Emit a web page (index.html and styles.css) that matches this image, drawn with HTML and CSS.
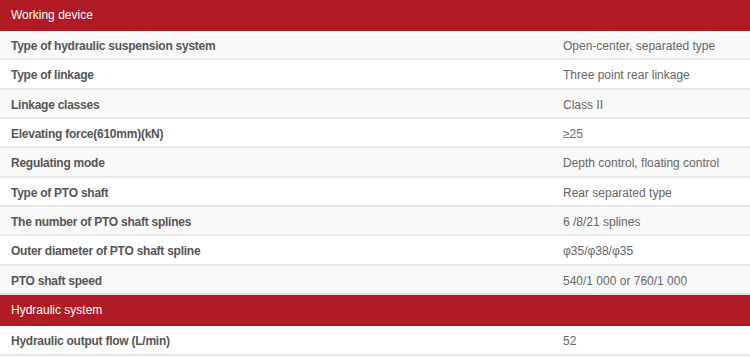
FILE: index.html
```html
<!DOCTYPE html>
<html>
<head>
<meta charset="utf-8">
<link rel="stylesheet" href="styles.css">
</head>
<body>
<div class="spec">
  <div class="group">Working device</div>
  <div class="row odd"><div class="label">Type of hydraulic suspension system</div><div class="value">Open-center, separated type</div></div>
  <div class="row"><div class="label">Type of linkage</div><div class="value">Three point rear linkage</div></div>
  <div class="row odd"><div class="label">Linkage classes</div><div class="value">Class II</div></div>
  <div class="row"><div class="label">Elevating force(610mm)(kN)</div><div class="value">≥25</div></div>
  <div class="row odd"><div class="label">Regulating mode</div><div class="value">Depth control, floating control</div></div>
  <div class="row"><div class="label">Type of PTO shaft</div><div class="value">Rear separated type</div></div>
  <div class="row odd"><div class="label">The number of PTO shaft splines</div><div class="value">6 /8/21 splines</div></div>
  <div class="row"><div class="label">Outer diameter of PTO shaft spline</div><div class="value">φ35/φ38/φ35</div></div>
  <div class="row odd"><div class="label">PTO shaft speed</div><div class="value">540/1 000 or 760/1 000</div></div>
  <div class="group">Hydraulic system</div>
  <div class="row last"><div class="label">Hydraulic output flow (L/min)</div><div class="value">52</div></div>
</div>
</body>
</html>
```
FILE: styles.css
```css
html, body {
  margin: 0;
  padding: 0;
  background: #ffffff;
}
.spec {
  width: 750px;
  font-family: "Liberation Sans", Arial, sans-serif;
  font-size: 12px;
}
.group {
  height: 31px;
  line-height: 31px;
  background: #b11c24;
  color: #ffffff;
  padding-left: 11px;
}
.row {
  box-sizing: border-box;
  display: grid;
  grid-template-columns: 563px 1fr;
  height: 29.33px;
  padding-top: 3px;
  align-items: center;
  border-bottom: 2px solid #e8e8e8;
  background: #ffffff;
}
.row.odd {
  background: #f9f9f9;
}
.row.last {
  height: 30px;
}
.label {
  padding-left: 11px;
  font-weight: bold;
  letter-spacing: -0.25px;
  color: #555555;
}
.value {
  color: #666666;
}
```
